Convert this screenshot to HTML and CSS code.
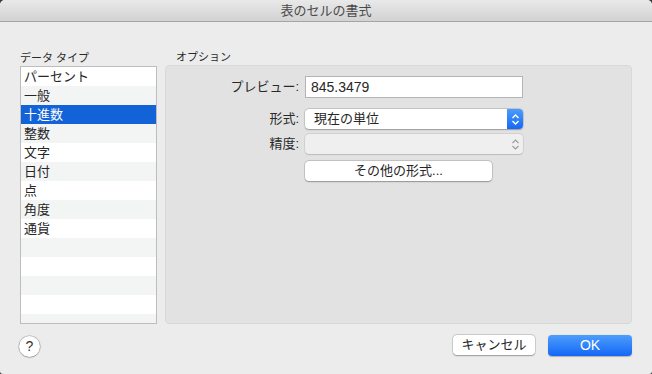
FILE: index.html
```html
<!DOCTYPE html>
<html lang="ja">
<head>
<meta charset="utf-8">
<link rel="stylesheet" href="styles.css">
</head>
<body>
<div class="window">
  <div class="titlebar">表のセルの書式</div>
  <div class="main">
    <div class="left">
      <div class="group-label">データ タイプ</div>
      <div class="list">
        <div class="row">パーセント</div>
        <div class="row alt">一般</div>
        <div class="row sel">十進数</div>
        <div class="row alt">整数</div>
        <div class="row">文字</div>
        <div class="row alt">日付</div>
        <div class="row">点</div>
        <div class="row alt">角度</div>
        <div class="row">通貨</div>
        <div class="row alt"></div>
        <div class="row"></div>
        <div class="row alt"></div>
        <div class="row"></div>
        <div class="row alt"></div>
      </div>
    </div>
    <div class="right">
      <div class="group-label opt">オプション</div>
      <div class="panel">
        <div class="form">
          <div class="flabel l1">プレビュー:</div>
          <div class="input l1">845.3479</div>
          <div class="flabel l2">形式:</div>
          <div class="popup l2"><span>現在の単位</span><span class="stepper blue"><svg width="9" height="13" viewBox="0 0 9 13"><path d="M1.5 5 L4.5 2 L7.5 5 M1.5 8 L4.5 11 L7.5 8" fill="none" stroke="#fff" stroke-width="1.4"/></svg></span></div>
          <div class="flabel l3">精度:</div>
          <div class="popup disabled l3"><span></span><span class="stepper"><svg width="9" height="13" viewBox="0 0 9 13"><path d="M1.5 5 L4.5 2 L7.5 5 M1.5 8 L4.5 11 L7.5 8" fill="none" stroke="#9a9a9a" stroke-width="1.1"/></svg></span></div>
          <div class="l4 spacer"></div>
          <div class="btn other l4">その他の形式...</div>
        </div>
      </div>
    </div>
  </div>
  <div class="footer">
    <div class="help">?</div>
    <div class="actions">
      <div class="btn cancel">キャンセル</div>
      <div class="btn ok">OK</div>
    </div>
  </div>
</div>
</body>
</html>
```
FILE: styles.css
```css
* { box-sizing: border-box; }
html, body { margin: 0; padding: 0; }
body {
  width: 652px;
  height: 374px;
  background: #3a3a3a;
  font-family: "Liberation Sans", "Noto Sans CJK JP", sans-serif;
  font-size: 13px;
  color: #262626;
  overflow: hidden;
}
.window {
  width: 652px;
  height: 374px;
  background: #ececec;
  border-radius: 5px 5px 3px 3px;
  overflow: hidden;
}
.titlebar {
  height: 22px;
  background: linear-gradient(#e9e9e9, #d2d2d2);
  border-bottom: 1px solid #a5a5a5;
  text-align: center;
  line-height: 21px;
  color: #4a4a4a;
  font-size: 13px;
}
.main {
  display: flex;
  padding: 0 20px 0 20px;
  gap: 8px;
  height: 302px;
}
.left { width: 137px; display: flex; flex-direction: column; }
.right { flex: 1; display: flex; flex-direction: column; }
.group-label {
  font-size: 11px;
  color: #2a2a2a;
  height: 22px;
  line-height: 13px;
  padding-top: 9px;
  margin-bottom: 22px;
  margin-bottom: 0;
  height: 44px;
  height: 44px;
}
.left .group-label { height: 44px; padding-top: 30px; }
.right .group-label { height: 43px; padding-top: 29px; padding-left: 11px; }
.list {
  height: 258px;
  border: 1px solid #bdbdbd;
  background: #fff;
  overflow: hidden;
}
.row {
  height: 19px;
  line-height: 19px;
  padding-left: 3px;
  font-size: 13px;
  color: #262626;
}
.row.alt { background: #f3f5f5; }
.row.sel { background: #1263d8; color: #fff; }
.panel {
  height: 259px;
  background: #e2e2e2;
  border: 1px solid #d8d8d8;
  border-radius: 4px;
}
.form {
  display: grid;
  grid-template-columns: 133px 218px;
  column-gap: 6px;
  padding-top: 10px;
}
.flabel {
  text-align: right;
  color: #2a2a2a;
  font-size: 13px;
  line-height: 20px;
}
.l1 { margin-bottom: 11px; }
.l2 { margin-bottom: 5px; }
.l3 { margin-bottom: 7px; }
.flabel.l1 { line-height: 22px; }
.input {
  height: 22px;
  background: #fff;
  border: 1px solid #b4b4b4;
  padding-left: 5px;
  line-height: 20px;
  font-size: 14px;
  color: #262626;
}
.popup {
  height: 20px;
  background: #fff;
  border-radius: 4px;
  box-shadow: 0 0 0 0.5px rgba(0,0,0,0.18), 0 0.5px 1.5px rgba(0,0,0,0.25);
  display: flex;
  justify-content: space-between;
  align-items: stretch;
  padding-left: 9px;
  line-height: 20px;
  overflow: hidden;
}
.popup.disabled {
  background: #efefef;
  box-shadow: 0 0 0 0.5px rgba(0,0,0,0.12), 0 0.5px 1px rgba(0,0,0,0.12);
}
.stepper {
  width: 16px;
  display: flex;
  align-items: center;
  justify-content: center;
}
.stepper.blue { background: linear-gradient(#4c9cfb, #1668f4); }
.btn {
  height: 20px;
  background: #fff;
  border-radius: 4px;
  box-shadow: 0 0 0 0.5px rgba(0,0,0,0.2), 0 0.5px 1.5px rgba(0,0,0,0.28);
  text-align: center;
  line-height: 20px;
  font-size: 13px;
  color: #262626;
}
.other { width: 187px; }
.footer {
  display: flex;
  justify-content: space-between;
  align-items: flex-start;
  padding: 11px 20px 0 19px;
}
.help {
  width: 21px;
  height: 21px;
  border-radius: 50%;
  background: #fff;
  box-shadow: 0 0 0 0.5px rgba(0,0,0,0.25), 0 0.5px 1.5px rgba(0,0,0,0.25);
  text-align: center;
  line-height: 21px;
  font-size: 14px;
  color: #333;
  margin-top: 1px;
}
.actions { display: flex; gap: 13px; }
.cancel { width: 82px; }
.ok {
  width: 84px;
  height: 21px;
  color: #fff;
  background: linear-gradient(#4d9dfc, #1467f5);
  box-shadow: 0 0.5px 1px rgba(0,0,0,0.25);
  font-size: 14px;
  line-height: 21px;
}
```
